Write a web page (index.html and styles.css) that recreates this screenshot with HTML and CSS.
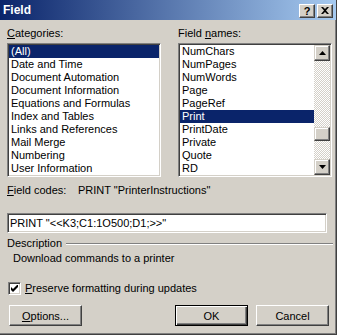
FILE: index.html
```html
<!DOCTYPE html>
<html lang="en">
<head>
    <meta charset="UTF-8">
    <title>Field</title>
    <link rel="stylesheet" href="styles.css">
</head>
<body>
<div class="window">
    <div class="titlebar">
        <span class="title">Field</span>
        <div class="title-btns">
            <div class="tbtn help">?</div>
            <div class="tbtn">
                <svg width="8" height="7" viewBox="0 0 8 7"><path d="M0 0h2l2 2 2-2h2l-3 3.5 3 3.5h-2l-2-2-2 2h-2l3-3.5z" fill="#000"/></svg>
            </div>
        </div>
    </div>

    <div class="content">
        <div class="lists">
            <div class="col">
                <div class="label"><u>C</u>ategories:</div>
                <div class="listbox">
                    <div class="item selected">(All)</div>
                    <div class="item">Date and Time</div>
                    <div class="item">Document Automation</div>
                    <div class="item">Document Information</div>
                    <div class="item">Equations and Formulas</div>
                    <div class="item">Index and Tables</div>
                    <div class="item">Links and References</div>
                    <div class="item">Mail Merge</div>
                    <div class="item">Numbering</div>
                    <div class="item">User Information</div>
                </div>
            </div>
            <div class="col">
                <div class="label">Field <u>n</u>ames:</div>
                <div class="listbox with-scroll">
                    <div class="items">
                        <div class="item">NumChars</div>
                        <div class="item">NumPages</div>
                        <div class="item">NumWords</div>
                        <div class="item">Page</div>
                        <div class="item">PageRef</div>
                        <div class="item selected">Print</div>
                        <div class="item">PrintDate</div>
                        <div class="item">Private</div>
                        <div class="item">Quote</div>
                        <div class="item">RD</div>
                    </div>
                    <div class="scrollbar">
                        <div class="sbtn">
                            <svg width="7" height="4" viewBox="0 0 7 4"><path d="M3.5 0L7 4H0z" fill="#000"/></svg>
                        </div>
                        <div class="track">
                            <div class="thumb"></div>
                        </div>
                        <div class="sbtn">
                            <svg width="7" height="4" viewBox="0 0 7 4"><path d="M0 0h7L3.5 4z" fill="#000"/></svg>
                        </div>
                    </div>
                </div>
            </div>
        </div>

        <div class="codes-row">
            <span class="codes-label"><u>F</u>ield codes:</span>
            <span>PRINT "PrinterInstructions"</span>
        </div>

        <div class="textbox">PRINT "&lt;&lt;K3;C1:1O500;D1;&gt;&gt;"</div>

        <div class="group-head">
            <span>Description</span>
            <div class="groove"></div>
        </div>
        <div class="desc">Download commands to a printer</div>

        <div class="check-row">
            <div class="checkbox">
                <svg width="7" height="7" viewBox="0 0 7 7"><path d="M0 2v3l2 2 5-5v-3l-5 5z" fill="#000"/></svg>
            </div>
            <span><u>P</u>reserve formatting during updates</span>
        </div>

        <div class="buttons">
            <div class="btn"><u>O</u>ptions...</div>
            <div class="right-btns">
                <div class="btn default">OK</div>
                <div class="btn">Cancel</div>
            </div>
        </div>
    </div>
</div>
</body>
</html>
```

FILE: styles.css
```css
body {
    margin: 0;
    font-family: "Liberation Sans", Arial, sans-serif;
    font-size: 11px;
    color: black;
    background: #d4d0c8;
}

.window {
    width: 336px;
    height: 334px;
    background: #d4d0c8;
    border-right: 1px solid #404040;
    border-bottom: 1px solid #404040;
    box-shadow: inset -1px -1px #808080;
    overflow: hidden;
}

.titlebar {
    height: 20px;
    display: flex;
    align-items: center;
    justify-content: space-between;
    padding: 0 3px 0 3px;
    background: linear-gradient(to right, #0a246a, #a6caf0);
}

.title {
    color: white;
    font-weight: bold;
    font-size: 12px;
}

.title-btns {
    display: flex;
    gap: 2px;
    margin-top: 1px;
}

.tbtn {
    width: 14px;
    height: 12px;
    display: flex;
    align-items: center;
    justify-content: center;
    background: #d4d0c8;
    border: 1px solid;
    border-color: #fff #404040 #404040 #fff;
    box-shadow: inset -1px -1px #808080;
}

.tbtn.help {
    font-weight: bold;
    font-size: 11px;
    line-height: 12px;
}

.content {
    padding: 7px 0 0 7px;
}

.lists {
    display: flex;
    gap: 17px;
}

.col {
    width: 154px;
}

.label {
    line-height: 13px;
    height: 13px;
    margin-bottom: 3px;
}

.listbox {
    height: 130px;
    background: white;
    border: 1px solid;
    border-color: #808080 #fff #fff #808080;
    box-shadow: inset 1px 1px #404040, inset -1px -1px #d4d0c8;
    padding: 1px;
    display: flex;
    flex-direction: column;
}

.listbox.with-scroll {
    flex-direction: row;
}

.items {
    flex: 1;
}

.item {
    height: 13px;
    line-height: 13px;
    padding-left: 2px;
    white-space: nowrap;
}

.item.selected {
    background: #0a246a;
    color: white;
}

.scrollbar {
    width: 16px;
    display: flex;
    flex-direction: column;
}

.sbtn {
    width: 14px;
    height: 14px;
    display: flex;
    align-items: center;
    justify-content: center;
    background: #d4d0c8;
    border: 1px solid;
    border-color: #d4d0c8 #404040 #404040 #d4d0c8;
    box-shadow: inset -1px -1px #808080, inset 1px 1px #fff;
}

.track {
    flex: 1;
    padding-top: 66px;
    background: repeating-conic-gradient(#fff 0 25%, #d4d0c8 0 50%) 0 0 / 2px 2px;
}

.thumb {
    width: 14px;
    height: 12px;
    background: #d4d0c8;
    border: 1px solid;
    border-color: #d4d0c8 #404040 #404040 #d4d0c8;
    box-shadow: inset -1px -1px #808080, inset 1px 1px #fff;
}

.codes-row {
    display: flex;
    margin-top: 7px;
    line-height: 13px;
}

.codes-label {
    width: 71px;
}

.textbox {
    width: 316px;
    height: 18px;
    line-height: 18px;
    margin-top: 16px;
    padding-left: 2px;
    background: white;
    border: 1px solid;
    border-color: #808080 #fff #fff #808080;
    box-shadow: inset 1px 1px #404040, inset -1px -1px #d4d0c8;
    white-space: nowrap;
}

.group-head {
    display: flex;
    align-items: center;
    gap: 4px;
    margin-top: 4px;
    line-height: 13px;
}

.groove {
    flex: 1;
    height: 0;
    border-top: 1px solid #808080;
    border-bottom: 1px solid #fff;
    margin-right: 3px;
}

.desc {
    margin-top: 2px;
    padding-left: 6px;
    line-height: 13px;
}

.check-row {
    display: flex;
    align-items: center;
    gap: 4px;
    margin-top: 17px;
    padding-left: 1px;
    line-height: 13px;
}

.checkbox {
    width: 9px;
    height: 9px;
    padding: 1px;
    display: flex;
    align-items: center;
    justify-content: center;
    background: white;
    border: 1px solid;
    border-color: #808080 #fff #fff #808080;
    box-shadow: inset 1px 1px #404040, inset -1px -1px #d4d0c8;
}

.buttons {
    display: flex;
    justify-content: space-between;
    margin-top: 10px;
    padding-left: 2px;
    width: 320px;
}

.right-btns {
    display: flex;
    gap: 8px;
}

.btn {
    width: 71px;
    height: 19px;
    display: flex;
    align-items: center;
    justify-content: center;
    background: #d4d0c8;
    border: 1px solid;
    border-color: #fff #404040 #404040 #fff;
    box-shadow: inset -1px -1px #808080;
}

.btn.default {
    border-color: #000;
    box-shadow: inset 1px 1px #fff, inset -1px -1px #404040, inset -2px -2px #808080;
}
```
